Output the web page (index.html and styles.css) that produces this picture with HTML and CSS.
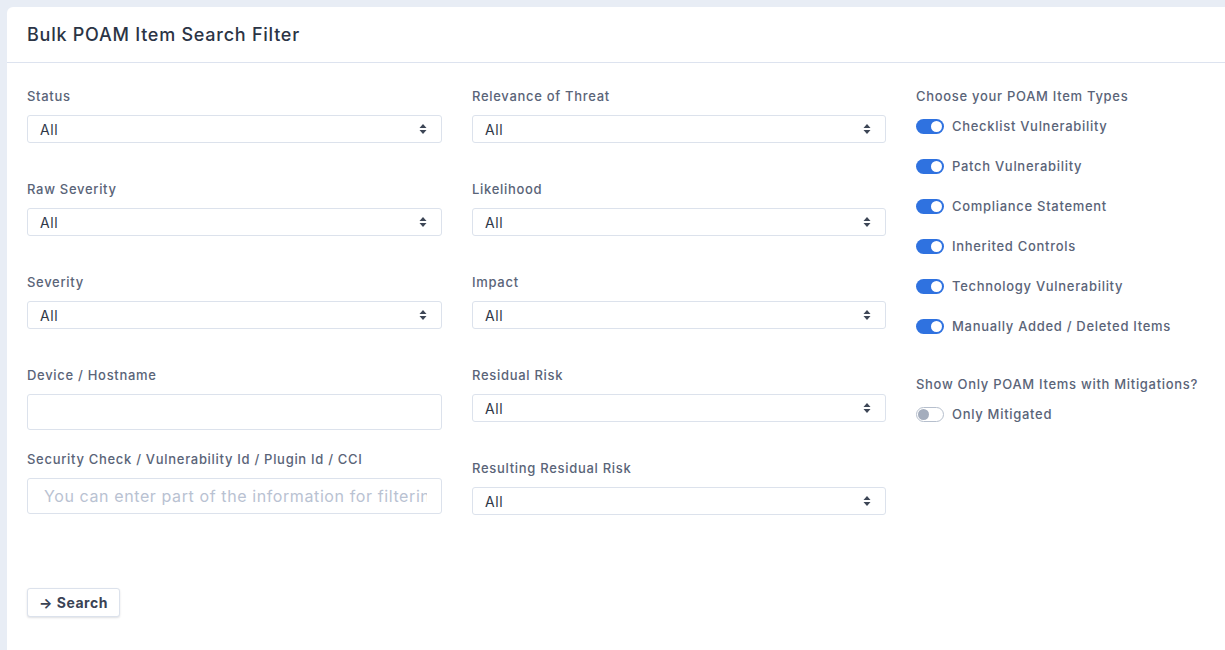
FILE: index.html
```html
<!DOCTYPE html>
<html lang="en">
<head>
<meta charset="utf-8">
<title>Bulk POAM Item Search Filter</title>
<link rel="stylesheet" href="styles.css">
</head>
<body>
<div class="card">
  <div class="card-header"><h1 class="title">Bulk POAM Item Search Filter</h1></div>
  <div class="card-body">
    <div class="grid">
      <div class="col">
        <div class="group"><label class="label">Status</label><div class="select"><span>All</span><svg class="caret" viewBox="0 0 8 12" width="8" height="12"><path d="M4 1 L7.5 5 H0.5 Z M4 11 L0.5 7 H7.5 Z" fill="#3d4656"/></svg></div></div>
        <div class="group"><label class="label">Raw Severity</label><div class="select"><span>All</span><svg class="caret" viewBox="0 0 8 12" width="8" height="12"><path d="M4 1 L7.5 5 H0.5 Z M4 11 L0.5 7 H7.5 Z" fill="#3d4656"/></svg></div></div>
        <div class="group"><label class="label">Severity</label><div class="select"><span>All</span><svg class="caret" viewBox="0 0 8 12" width="8" height="12"><path d="M4 1 L7.5 5 H0.5 Z M4 11 L0.5 7 H7.5 Z" fill="#3d4656"/></svg></div></div>
        <div class="group group-input"><label class="label">Device / Hostname</label><div class="input"></div></div>
        <div class="group group-input"><label class="label">Security Check / Vulnerability Id / Plugin Id / CCI</label><div class="input"><span class="placeholder">You can enter part of the information for filtering</span></div></div>
      </div>
      <div class="col">
        <div class="group"><label class="label">Relevance of Threat</label><div class="select"><span>All</span><svg class="caret" viewBox="0 0 8 12" width="8" height="12"><path d="M4 1 L7.5 5 H0.5 Z M4 11 L0.5 7 H7.5 Z" fill="#3d4656"/></svg></div></div>
        <div class="group"><label class="label">Likelihood</label><div class="select"><span>All</span><svg class="caret" viewBox="0 0 8 12" width="8" height="12"><path d="M4 1 L7.5 5 H0.5 Z M4 11 L0.5 7 H7.5 Z" fill="#3d4656"/></svg></div></div>
        <div class="group"><label class="label">Impact</label><div class="select"><span>All</span><svg class="caret" viewBox="0 0 8 12" width="8" height="12"><path d="M4 1 L7.5 5 H0.5 Z M4 11 L0.5 7 H7.5 Z" fill="#3d4656"/></svg></div></div>
        <div class="group"><label class="label">Residual Risk</label><div class="select"><span>All</span><svg class="caret" viewBox="0 0 8 12" width="8" height="12"><path d="M4 1 L7.5 5 H0.5 Z M4 11 L0.5 7 H7.5 Z" fill="#3d4656"/></svg></div></div>
        <div class="group"><label class="label">Resulting Residual Risk</label><div class="select"><span>All</span><svg class="caret" viewBox="0 0 8 12" width="8" height="12"><path d="M4 1 L7.5 5 H0.5 Z M4 11 L0.5 7 H7.5 Z" fill="#3d4656"/></svg></div></div>
      </div>
      <div class="col">
        <div class="label">Choose your POAM Item Types</div>
        <ul class="switches">
          <li class="switch-row"><span class="switch on"><span class="knob"></span></span><span class="switch-text">Checklist Vulnerability</span></li>
          <li class="switch-row"><span class="switch on"><span class="knob"></span></span><span class="switch-text">Patch Vulnerability</span></li>
          <li class="switch-row"><span class="switch on"><span class="knob"></span></span><span class="switch-text">Compliance Statement</span></li>
          <li class="switch-row"><span class="switch on"><span class="knob"></span></span><span class="switch-text">Inherited Controls</span></li>
          <li class="switch-row"><span class="switch on"><span class="knob"></span></span><span class="switch-text">Technology Vulnerability</span></li>
          <li class="switch-row"><span class="switch on"><span class="knob"></span></span><span class="switch-text">Manually Added / Deleted Items</span></li>
        </ul>
        <div class="label label-mit">Show Only POAM Items with Mitigations?</div>
        <ul class="switches">
          <li class="switch-row"><span class="switch off"><span class="knob"></span></span><span class="switch-text">Only Mitigated</span></li>
        </ul>
      </div>
    </div>
    <button class="btn" type="button"><span class="arrow">&#8594;</span> Search</button>
  </div>
</div>
</body>
</html>
```
FILE: styles.css
```css
html, body {
  margin: 0;
  padding: 0;
}
body {
  background: #e8edf5;
  font-family: "Inter", "Open Sans", sans-serif;
  color: #5a6478;
  overflow: hidden;
  width: 1225px;
  height: 650px;
}
.card {
  margin: 7px 0 0 7px;
  width: 1350px;
  min-height: 700px;
  background: #fff;
  border-radius: 6px;
}
.card-header {
  height: 55px;
  border-bottom: 1px solid #dde3ef;
  display: flex;
  align-items: center;
  padding: 0 20px;
}
.title {
  margin: 0;
  font-size: 18px;
  font-weight: 500;
  color: #2b3445;
  letter-spacing: 0.75px;
}
.card-body {
  padding: 23px 20px 20px;
}
.grid {
  display: grid;
  grid-template-columns: 415px 414px 415px;
  column-gap: 30px;
}
.col {
  display: flex;
  flex-direction: column;
}
.label {
  display: block;
  font-size: 13px;
  line-height: 20px;
  color: #5a6478;
  font-weight: 500;
  letter-spacing: 0.7px;
}
.group .label {
  margin-bottom: 9px;
}
.group {
  margin-bottom: 36px;
}
.group-input {
  margin-bottom: 19px;
}
.select {
  height: 28px;
  box-sizing: border-box;
  border: 1px solid #dce2ec;
  border-radius: 3px;
  display: flex;
  align-items: center;
  justify-content: space-between;
  padding: 0 14px 0 12px;
  font-size: 14px;
  color: #2f3747;
  letter-spacing: 0.6px;
}
.caret {
  display: block;
}
.input {
  height: 36px;
  box-sizing: border-box;
  border: 1px solid #dce2ec;
  border-radius: 3px;
  display: flex;
  align-items: center;
  padding: 0 14px 0 16px;
  overflow: hidden;
  white-space: nowrap;
  font-size: 16px;
  letter-spacing: 0.6px;
}
.placeholder {
  color: #b9c2d2;
  overflow: hidden;
}
.switches {
  list-style: none;
  margin: 0;
  padding: 0;
}
.switch-row {
  display: flex;
  align-items: center;
  height: 40px;
}
.switch {
  width: 28px;
  height: 15px;
  box-sizing: border-box;
  border-radius: 8px;
  position: relative;
  margin-right: 8px;
  flex: none;
}
.switch.on {
  background: #2f72e0;
}
.switch.off {
  background: #fff;
  border: 1px solid #b6bfcd;
}
.knob {
  position: absolute;
  top: 2px;
  width: 11px;
  height: 11px;
  border-radius: 50%;
}
.switch.on .knob {
  right: 2px;
  background: #fff;
}
.switch.off .knob {
  left: 1px;
  top: 1px;
  background: #a4adbd;
}
.switch-text {
  font-size: 13px;
  color: #5a6478;
  font-weight: 500;
  letter-spacing: 0.7px;
}
.label-mit {
  margin-top: 28px;
}
.btn {
  margin-top: 37px;
  height: 29px;
  width: 93px;
  background: #fff;
  border: 1px solid #dce2ec;
  border-radius: 3px;
  box-shadow: 0 1px 2px rgba(40, 50, 70, 0.15);
  font-family: inherit;
  font-size: 14px;
  font-weight: 700;
  color: #3a4354;
  padding: 0;
  letter-spacing: 0.5px;
}
.arrow {
  font-weight: 700;
}
```
